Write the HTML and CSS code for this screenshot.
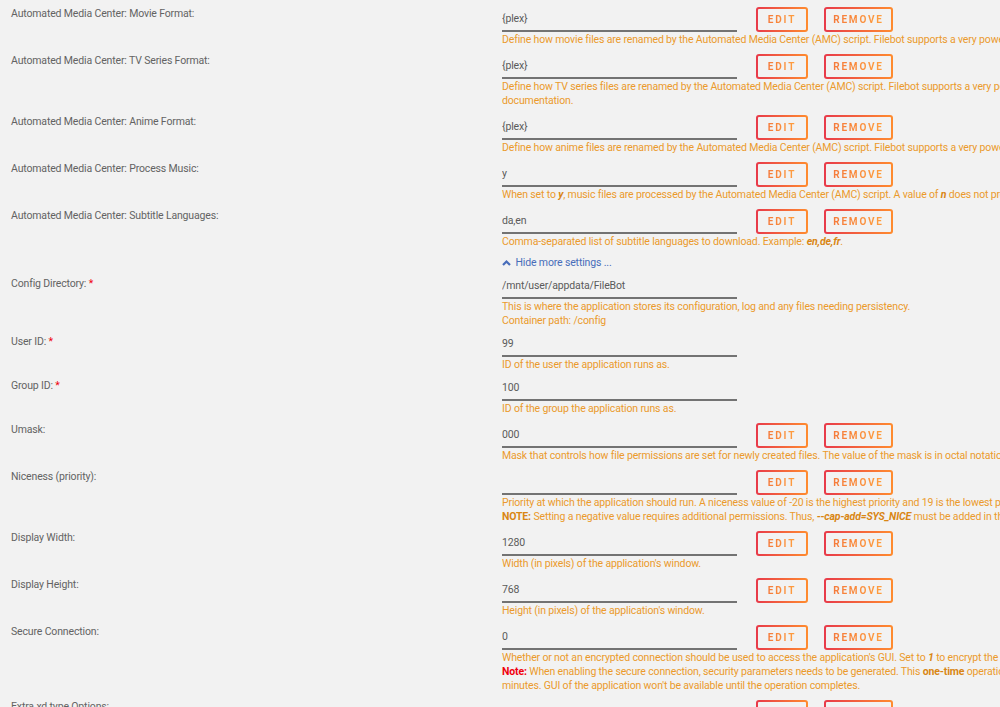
FILE: index.html
```html
<!DOCTYPE html>
<html lang="en">
<head>
    <meta charset="UTF-8">
    <title>FileBot - Template</title>
    <link rel="stylesheet" href="styles.css">
</head>
<body>
    <div class="settings">
        <div class="row">
            <div class="label">Automated Media Center: Movie Format:</div>
            <div class="field">
                <div class="control">
                    <input class="value" type="text" value="{plex}">
                    <button class="btn edit"><span>EDIT</span></button>
                    <button class="btn remove"><span>REMOVE</span></button>
                </div>
                <div class="desc">Define how movie files are renamed by the Automated Media Center (AMC) script. Filebot supports a very powerful naming scheme. See the documentation.</div>
            </div>
        </div>

        <div class="row">
            <div class="label">Automated Media Center: TV Series Format:</div>
            <div class="field">
                <div class="control">
                    <input class="value" type="text" value="{plex}">
                    <button class="btn edit"><span>EDIT</span></button>
                    <button class="btn remove"><span>REMOVE</span></button>
                </div>
                <div class="desc">Define how TV series files are renamed by the Automated Media Center (AMC) script. Filebot supports a very powerful naming scheme, see Filebot<br>documentation.</div>
            </div>
        </div>

        <div class="row">
            <div class="label">Automated Media Center: Anime Format:</div>
            <div class="field">
                <div class="control">
                    <input class="value" type="text" value="{plex}">
                    <button class="btn edit"><span>EDIT</span></button>
                    <button class="btn remove"><span>REMOVE</span></button>
                </div>
                <div class="desc">Define how anime files are renamed by the Automated Media Center (AMC) script. Filebot supports a very powerful naming scheme. See the documentation.</div>
            </div>
        </div>

        <div class="row">
            <div class="label">Automated Media Center: Process Music:</div>
            <div class="field">
                <div class="control">
                    <input class="value" type="text" value="y">
                    <button class="btn edit"><span>EDIT</span></button>
                    <button class="btn remove"><span>REMOVE</span></button>
                </div>
                <div class="desc">When set to <b><i>y</i></b>, music files are processed by the Automated Media Center (AMC) script. A value of <b><i>n</i></b> does not process them.</div>
            </div>
        </div>

        <div class="row">
            <div class="label">Automated Media Center: Subtitle Languages:</div>
            <div class="field">
                <div class="control">
                    <input class="value" type="text" value="da,en">
                    <button class="btn edit"><span>EDIT</span></button>
                    <button class="btn remove"><span>REMOVE</span></button>
                </div>
                <div class="desc">Comma-separated list of subtitle languages to download. Example: <b><i>en,de,fr</i></b>.</div>
            </div>
        </div>

        <div class="more">
            <a href="#">
                <svg width="9" height="7" viewBox="0 0 9 7"><path d="M1 6 L4.5 2.5 L8 6" fill="none" stroke="#486dba" stroke-width="2.2"/></svg>
                Hide more settings ...
            </a>
        </div>

        <div class="row plain">
            <div class="label">Config Directory: <span class="req">*</span></div>
            <div class="field">
                <div class="control">
                    <input class="value" type="text" value="/mnt/user/appdata/FileBot">
                </div>
                <div class="desc">This is where the application stores its configuration, log and any files needing persistency.<br>Container path: /config</div>
            </div>
        </div>

        <div class="row plain">
            <div class="label">User ID: <span class="req">*</span></div>
            <div class="field">
                <div class="control">
                    <input class="value" type="text" value="99">
                </div>
                <div class="desc">ID of the user the application runs as.</div>
            </div>
        </div>

        <div class="row plain">
            <div class="label">Group ID: <span class="req">*</span></div>
            <div class="field">
                <div class="control">
                    <input class="value" type="text" value="100">
                </div>
                <div class="desc">ID of the group the application runs as.</div>
            </div>
        </div>

        <div class="row">
            <div class="label">Umask:</div>
            <div class="field">
                <div class="control">
                    <input class="value" type="text" value="000">
                    <button class="btn edit"><span>EDIT</span></button>
                    <button class="btn remove"><span>REMOVE</span></button>
                </div>
                <div class="desc">Mask that controls how file permissions are set for newly created files. The value of the mask is in octal notation.</div>
            </div>
        </div>

        <div class="row">
            <div class="label">Niceness (priority):</div>
            <div class="field">
                <div class="control">
                    <input class="value" type="text" value="">
                    <button class="btn edit"><span>EDIT</span></button>
                    <button class="btn remove"><span>REMOVE</span></button>
                </div>
                <div class="desc">Priority at which the application should run. A niceness value of -20 is the highest priority and 19 is the lowest priority.<br><b>NOTE:</b> Setting a negative value requires additional permissions. Thus, <b><i>--cap-add=SYS_NICE</i></b> must be added in the Extra Parameters.</div>
            </div>
        </div>

        <div class="row">
            <div class="label">Display Width:</div>
            <div class="field">
                <div class="control">
                    <input class="value" type="text" value="1280">
                    <button class="btn edit"><span>EDIT</span></button>
                    <button class="btn remove"><span>REMOVE</span></button>
                </div>
                <div class="desc">Width (in pixels) of the application's window.</div>
            </div>
        </div>

        <div class="row">
            <div class="label">Display Height:</div>
            <div class="field">
                <div class="control">
                    <input class="value" type="text" value="768">
                    <button class="btn edit"><span>EDIT</span></button>
                    <button class="btn remove"><span>REMOVE</span></button>
                </div>
                <div class="desc">Height (in pixels) of the application's window.</div>
            </div>
        </div>

        <div class="row">
            <div class="label">Secure Connection:</div>
            <div class="field">
                <div class="control">
                    <input class="value" type="text" value="0">
                    <button class="btn edit"><span>EDIT</span></button>
                    <button class="btn remove"><span>REMOVE</span></button>
                </div>
                <div class="desc">Whether or not an encrypted connection should be used to access the application's GUI. Set to <b><i>1</i></b> to encrypt the connection.<br><span class="note">Note:</span> When enabling the secure connection, security parameters needs to be generated. This <b>one-time</b> operation can take several<br>minutes. GUI of the application won't be available until the operation completes.</div>
            </div>
        </div>

        <div class="row">
            <div class="label">Extra xd type Options:</div>
            <div class="field">
                <div class="control">
                    <input class="value" type="text" value="">
                    <button class="btn edit"><span>EDIT</span></button>
                    <button class="btn remove"><span>REMOVE</span></button>
                </div>
                <div class="desc">Extra options.</div>
            </div>
        </div>
    </div>
</body>
</html>
```

FILE: styles.css
```css
body {
    margin: 0;
    background-color: #f2f2f2;
    font-family: Roboto, "Open Sans", sans-serif;
    font-size: 10.5px;
    letter-spacing: -0.15px;
    color: #636363;
    overflow: hidden;
}
.settings {
    padding-top: 7px;
    width: 1400px;
}
.row {
    display: grid;
    grid-template-columns: 491px 1fr;
    padding-left: 11px;
    margin-bottom: 7px;
}
.label {
    line-height: 14px;
}
.req {
    color: #f0000c;
}
.control {
    display: flex;
    align-items: flex-end;
    height: 25px;
}
.plain .control {
    height: 22px;
}
.value {
    width: 235px;
    height: 22px;
    box-sizing: border-box;
    margin: 0;
    padding: 0 0 3px;
    border: none;
    border-bottom: 2px solid #737373;
    background: transparent;
    font-family: Roboto, "Open Sans", sans-serif;
    font-size: 10.5px;
    letter-spacing: -0.15px;
    color: #5a5a5a;
    outline: none;
}
.btn {
    height: 25px;
    box-sizing: border-box;
    margin: 0 0 0 16px;
    padding: 0;
    border: 2px solid transparent;
    border-radius: 3px;
    background: linear-gradient(#f2f2f2, #f2f2f2) padding-box,
                linear-gradient(90deg, #e83a4a, #ff8c2f) border-box;
    font-family: Roboto, "Open Sans", sans-serif;
    font-size: 10px;
    font-weight: bold;
    letter-spacing: 1.8px;
    cursor: pointer;
}
.btn span {
    background: linear-gradient(90deg, #f57a3a, #ffa040);
    -webkit-background-clip: text;
    background-clip: text;
    color: transparent;
}
.edit {
    width: 52px;
    margin-left: 19px;
}
.remove {
    width: 69px;
}
.desc {
    margin-top: 1px;
    line-height: 14px;
    color: #eb9a2c;
    white-space: nowrap;
}
.desc b {
    color: #d98614;
}
.desc .note {
    color: #f0000c;
    font-weight: bold;
}
.more {
    padding-left: 502px;
    line-height: 14px;
    margin-top: 2px;
    margin-bottom: 7px;
}
.more a {
    color: #486dba;
    text-decoration: none;
}
.more svg {
    margin-right: 2px;
}
```
